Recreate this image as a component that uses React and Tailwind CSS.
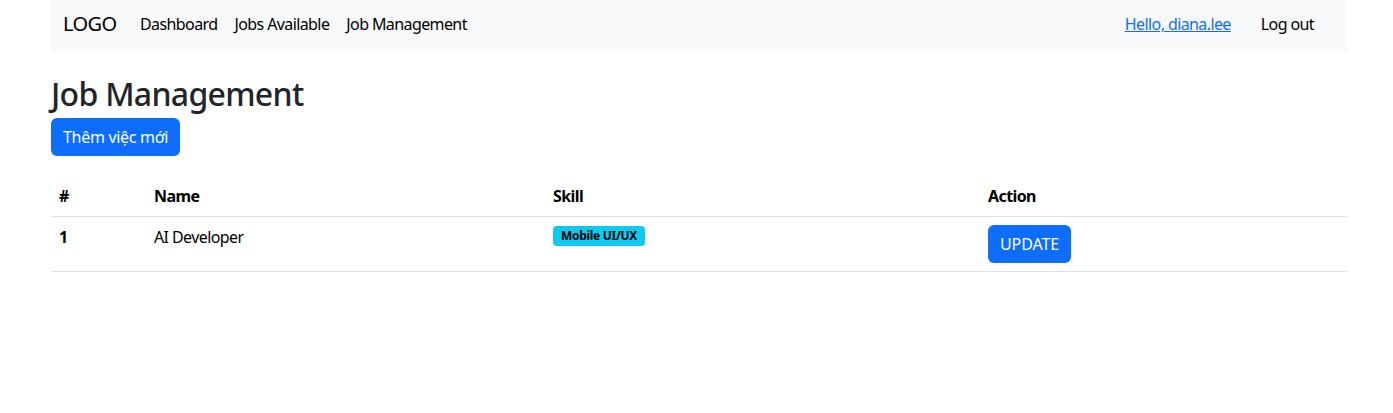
export default function App() {
  const font = { fontFamily: '"Noto Sans", "Open Sans", sans-serif' };
  return (
    <div className="min-h-[413px] bg-white text-[#212529] tracking-[-0.6px]" style={font}>
      <div className="ml-[51px] w-[1296px]">
        <nav className="flex h-[51px] items-center bg-[#f8f9fa] px-3 pb-[3px]">
          <span className="w-[77px] text-[20px] text-black">LOGO</span>
          <div className="flex gap-[17px] text-[16px] text-black">
            <span>Dashboard</span>
            <span>Jobs Available</span>
            <span>Job Management</span>
          </div>
          <div className="ml-auto flex items-center text-[16px]">
            <a className="text-[#0d6efd] underline">Hello, diana.lee</a>
            <span className="ml-[30px] mr-[21px] text-black">Log out</span>
          </div>
        </nav>
        <h2 className="mt-[24px] text-[32px] leading-[1.2] font-medium tracking-[-0.7px] text-[#212529]">Job Management</h2>
        <button className="mt-[5px] h-[38px] rounded-[6px] bg-[#0d6efd] px-3 text-[16px] tracking-[-0.3px] text-white">Thêm việc mới</button>
        <table className="mt-[20px] w-full border-collapse text-[16px] text-black">
          <thead>
            <tr className="border-b border-[#dee2e6] text-left">
              <th className="w-[95px] p-2 font-bold">#</th>
              <th className="w-[399px] p-2 font-bold">Name</th>
              <th className="w-[435px] p-2 font-bold">Skill</th>
              <th className="p-2 font-bold">Action</th>
            </tr>
          </thead>
          <tbody>
            <tr className="border-b border-[#dee2e6] align-top">
              <td className="p-2 font-bold">1</td>
              <td className="p-2">AI Developer</td>
              <td className="p-2">
                <div className="flex pt-[1px]">
                  <span className="rounded-[4px] bg-[#0dcaf0] px-[8px] py-[3px] text-[12px] leading-[14px] font-bold tracking-[-0.3px] text-black">Mobile UI/UX</span>
                </div>
              </td>
              <td className="p-2">
                <button className="h-[38px] rounded-[6px] bg-[#0d6efd] px-3 text-[16px] tracking-[-0.1px] text-white">UPDATE</button>
              </td>
            </tr>
          </tbody>
        </table>
      </div>
    </div>
  );
}
